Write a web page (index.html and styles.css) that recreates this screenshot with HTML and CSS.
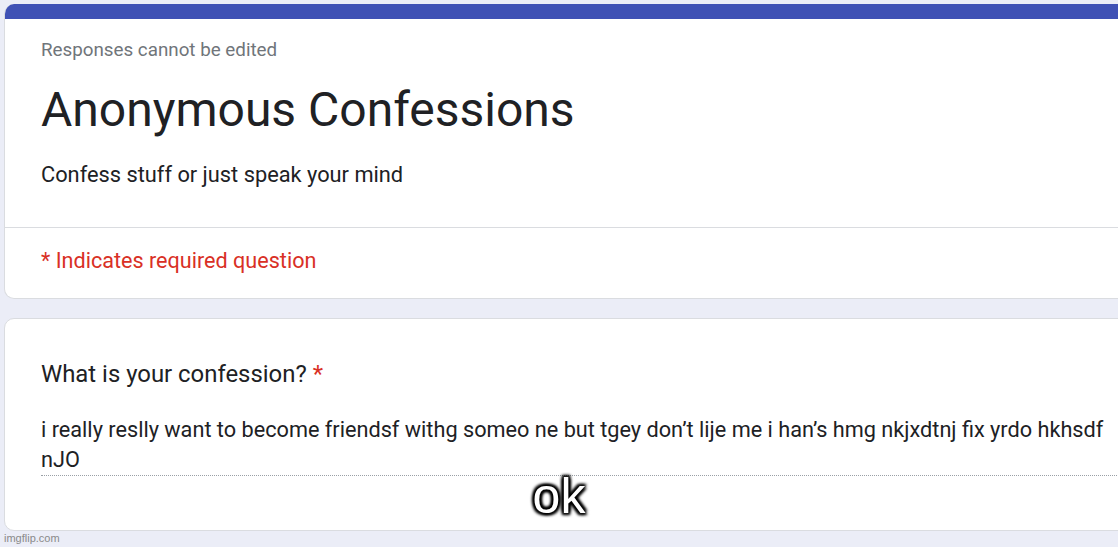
FILE: index.html
```html
<!DOCTYPE html>
<html>
<head>
<meta charset="utf-8">
<link rel="stylesheet" href="styles.css">
</head>
<body>
<div class="page">
  <div class="card head-card">
    <div class="head-bar"></div>
    <div class="head-main">
      <div class="note">Responses cannot be edited</div>
      <h1 class="title">Anonymous Confessions</h1>
      <div class="desc">Confess stuff or just speak your mind</div>
    </div>
    <div class="head-req">* Indicates required question</div>
  </div>
  <div class="card q-card">
    <div class="question">What is your confession? <span class="star">*</span></div>
    <div class="answer">i really reslly want to become friendsf withg someo ne but tgey don’t lije me i han’s hmg nkjxdtnj fix yrdo hkhsdf nJO</div>
  </div>
</div>
<div class="caption">ok</div>
<div class="watermark">imgflip.com</div>
</body>
</html>
```
FILE: styles.css
```css
html, body {
  margin: 0;
  padding: 0;
}
body {
  width: 1118px;
  height: 547px;
  overflow: hidden;
  background: #ebedf7;
  font-family: Roboto, "Liberation Sans", sans-serif;
  color: #202124;
  position: relative;
}
.page {
  padding: 4px 0 0 4px;
  display: flex;
  flex-direction: column;
  gap: 19px;
}
.card {
  width: 1160px;
  background: #fff;
  border: 1px solid #dadce0;
  border-radius: 10px;
  box-sizing: border-box;
}
.head-card {
  border-top: none;
  overflow: hidden;
}
.head-bar {
  height: 15px;
  background: #3f51b5;
}
.head-main {
  padding: 19px 36px 38px 36px;
  border-bottom: 1px solid #dadce0;
}
.note {
  font-size: 18.8px;
  line-height: 24px;
  color: #70757a;
}
.title {
  margin: 20px 0 0 0;
  font-size: 48px;
  line-height: 56px;
  font-weight: 400;
  color: #202124;
}
.desc {
  margin-top: 23px;
  font-size: 21.8px;
  line-height: 28px;
}
.head-req {
  padding: 19px 36px 23px 36px;
  font-size: 21.6px;
  line-height: 28px;
  color: #d93025;
}
.q-card {
  padding: 40px 36px 54px 36px;
}
.question {
  font-size: 23.9px;
  line-height: 30px;
}
.star {
  color: #d93025;
}
.answer {
  margin-top: 26px;
  font-size: 21.7px;
  line-height: 30px;
  border-bottom: 1px dotted #9aa0a6;
}
.caption {
  position: absolute;
  left: 0;
  right: 0;
  top: 468px;
  text-align: center;
  font-family: "Liberation Sans", Arial, sans-serif;
  font-size: 50px;
  line-height: 56px;
  color: #fff;
  text-shadow: 0 0 2px #000, 0 0 3px #000, 0 0 4px #000, 2px 2px 3px #000, -2px -2px 3px #000, 2px -2px 3px #000, -2px 2px 3px #000;
}
.watermark {
  position: absolute;
  left: 4px;
  bottom: 3px;
  font-family: "Liberation Sans", Arial, sans-serif;
  font-size: 11px;
  color: #8a8a8a;
}
```
